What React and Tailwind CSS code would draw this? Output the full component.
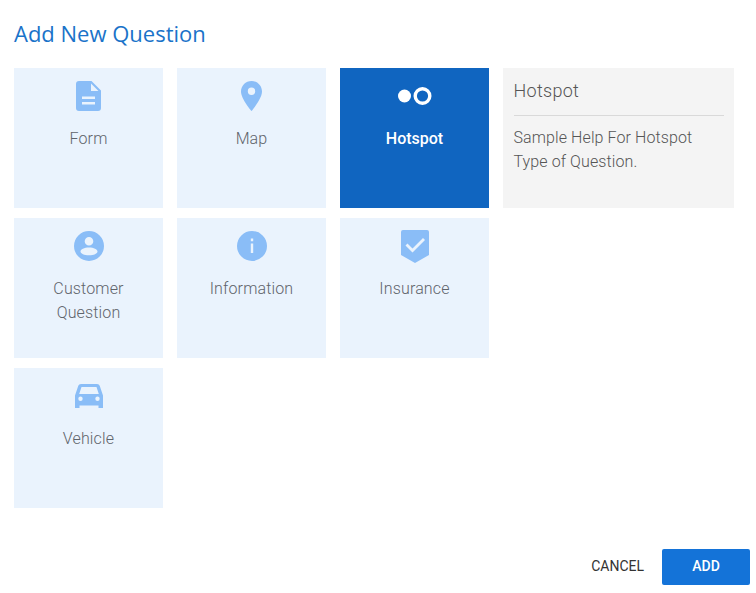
import React from 'react';

const FormIcon = ({ className }) => (
  <svg viewBox="0 0 25 30" className={className} fill="currentColor">
    <path fillRule="evenodd" d="M3 0H15.500L25 9.500V27a3 3 0 0 1-3 3H3a3 3 0 0 1-3-3V3a3 3 0 0 1 3-3ZM15 2.500V10H22.500ZM6 15.500v2.500H19v-2.500ZM6 21v2.500H19V21Z" />
  </svg>
);

const PinIcon = ({ className }) => (
  <svg viewBox="0 0 21 30" className={className} fill="currentColor">
    <path fillRule="evenodd" d="M10.500 0C4.700 0 0 4.700 0 10.500 0 18 10.500 30 10.500 30S21 18 21 10.500C21 4.700 16.300 0 10.500 0Zm0 14a3.700 3.700 0 1 1 0-7.400 3.700 3.700 0 0 1 0 7.400Z" />
  </svg>
);

const HotspotIcon = ({ className }) => (
  <svg viewBox="0 0 34 18" className={className} fill="currentColor">
    <circle cx="6.500" cy="9" r="6.500" />
    <circle cx="24.500" cy="9" r="7.300" fill="none" stroke="currentColor" strokeWidth="3.400" />
  </svg>
);

const CustomerIcon = ({ className }) => (
  <svg viewBox="0 0 30 30" className={className} fill="currentColor">
    <path fillRule="evenodd" d="M15 0a15 15 0 1 1 0 30 15 15 0 0 1 0-30Zm0 6a4.300 4.300 0 1 0 0 8.600A4.300 4.300 0 0 0 15 6Zm0 10.500c-4.800 0-8.500 1.900-8.500 3.900s3.700 3.900 8.500 3.900 8.500-1.900 8.500-3.900-3.700-3.900-8.500-3.900Z" />
  </svg>
);

const InfoIcon = ({ className }) => (
  <svg viewBox="0 0 30 30" className={className} fill="currentColor">
    <path fillRule="evenodd" d="M15 0a15 15 0 1 1 0 30 15 15 0 0 1 0-30Zm-1.200 7.500v2.800h2.400V7.500Zm0 5V22h2.400v-9.500Z" />
  </svg>
);

const ShieldIcon = ({ className }) => (
  <svg viewBox="0 0 28 33" className={className} fill="currentColor">
    <path fillRule="evenodd" d="M2 0H26a2 2 0 0 1 2 2V25L14 33 0 25V2A2 2 0 0 1 2 0ZM22 8 11.500 18.500 6.500 13.500 4.500 15.500 11.500 22.500 24 10Z" />
  </svg>
);

const CarIcon = ({ className }) => (
  <svg viewBox="0 0 28 24" className={className} fill="currentColor">
    <path fillRule="evenodd" d="M6 0H22C23.300 0 24.400 .8 24.800 2L28 11.500V24H23.500V21.500H4.500V24H0V11.500L3.200 2C3.600 .8 4.700 0 6 0ZM6.500 3 4.200 10H23.800L21.500 3ZM5.500 12.500a2.200 2.200 0 1 0 0 4.400 2.200 2.200 0 0 0 0-4.400Zm17 0a2.200 2.200 0 1 0 0 4.400 2.200 2.200 0 0 0 0-4.400Z" />
  </svg>
);

const tipos = [
  { nombre: ['Form'], icono: <FormIcon className="w-[25px] h-[30px]" /> },
  { nombre: ['Map'], icono: <PinIcon className="w-[21px] h-[30px]" /> },
  { nombre: ['Hotspot'], icono: <HotspotIcon className="w-[34px] h-[18px]" />, activo: true },
  { nombre: ['Customer', 'Question'], icono: <CustomerIcon className="w-[30px] h-[30px]" /> },
  { nombre: ['Information'], icono: <InfoIcon className="w-[30px] h-[30px]" /> },
  { nombre: ['Insurance'], icono: <ShieldIcon className="w-[28px] h-[33px]" /> },
  { nombre: ['Vehicle'], icono: <CarIcon className="w-[28px] h-[24px]" /> },
];

const Tile = ({ tipo }) => (
  <div className={`h-[140px] flex flex-col items-center ${tipo.activo ? 'bg-[#1065c0] text-white' : 'bg-[#eaf3fd] text-[#5f646b]'}`}>
    <div className={`h-[56px] flex items-center justify-center ${tipo.activo ? 'text-white' : 'text-[#8abdf7]'}`}>
      {tipo.icono}
    </div>
    <div className={`mt-[3px] text-center text-[16px] leading-[24px] ${tipo.activo ? 'font-medium' : 'font-light tracking-[0.15px]'}`}>
      {tipo.nombre.map((linea) => (
        <div key={linea}>{linea}</div>
      ))}
    </div>
  </div>
);

const App = () => {
  return (
    <div className="w-[756px] h-[593px] bg-white flex flex-col font-['Roboto',sans-serif] overflow-hidden">
      <h2 className="pl-[14px] pt-[17px] h-[68px] text-[22px] leading-[32px] text-[#1a73c9] font-['Open_Sans',sans-serif]">
        Add New Question
      </h2>

      <div className="pl-[14px] pr-[22px] grid grid-cols-[149px_149px_149px_231px] gap-x-[14px] gap-y-[10px]">
        {tipos.slice(0, 3).map((tipo) => (
          <Tile key={tipo.nombre[0]} tipo={tipo} />
        ))}
        <div className="h-[140px] bg-[#f4f4f4] px-[10.500px]">
          <div className="h-[48px] pt-[10px] text-[18px] leading-[26px] font-light tracking-[0.3px] text-[#555555] border-b border-[#d9d9d9]">
            Hotspot
          </div>
          <p className="mt-[10px] text-[16px] leading-[24px] font-light tracking-[0.1px] text-[#555555]">
            Sample Help For Hotspot Type of Question.
          </p>
        </div>
        {tipos.slice(3, 6).map((tipo) => (
          <Tile key={tipo.nombre[0]} tipo={tipo} />
        ))}
        <div />
        <Tile tipo={tipos[6]} />
      </div>

      <div className="mt-[41px] pr-[6px] flex justify-end items-center">
        <button type="button" className="mr-[18px] pb-[1px] text-[14px] text-[#333333]">CANCEL</button>
        <button type="button" className="w-[88px] h-[36px] pb-[1px] bg-[#1473d8] rounded-[2px] text-white text-[14px] font-medium">ADD</button>
      </div>
    </div>
  );
};

export default App;
